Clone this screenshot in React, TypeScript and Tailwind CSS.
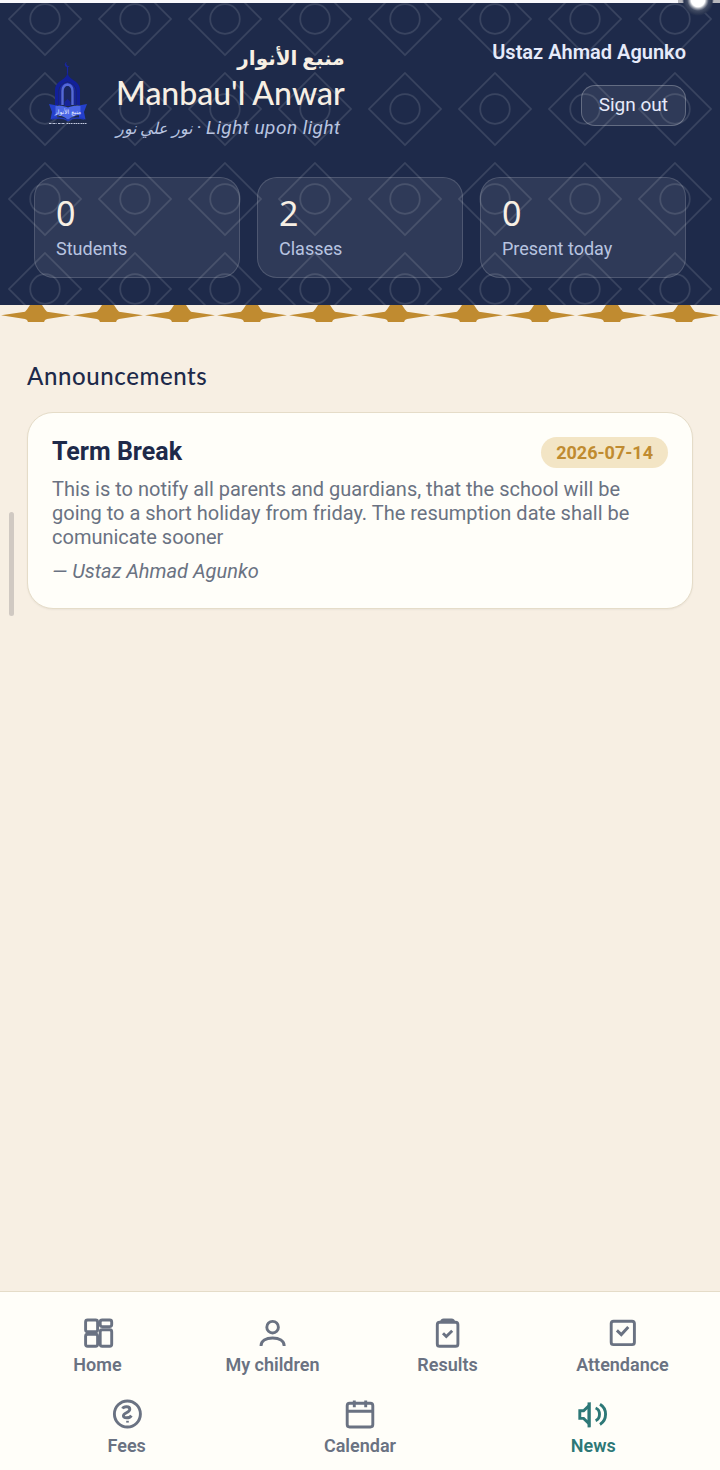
import type { ReactNode } from "react";

const stats = [
  { label: "Students", value: 0 },
  { label: "Classes", value: 2 },
  { label: "Present today", value: 0 },
];

const announcements = [
  {
    title: "Term Break",
    date: "2026-07-14",
    body: "This is to notify all parents and guardians, that the school will be going to a short holiday from friday. The resumption date shall be comunicate sooner",
    author: "Ustaz Ahmad Agunko",
  },
];

function NavIcon({ children }: { children: ReactNode }) {
  return (
    <svg
      viewBox="0 0 36 36"
      className="size-9"
      fill="none"
      stroke="currentColor"
      strokeWidth="2.9"
      aria-hidden="true"
    >
      {children}
    </svg>
  );
}

const navItems = [
  {
    label: "Home",
    icon: (
      <NavIcon>
        <rect x="5.6" y="5" width="12" height="11.8" rx="2" />
        <rect x="20.2" y="5" width="11.5" height="6.6" rx="2" />
        <rect x="5.6" y="19.2" width="12" height="12" rx="2" />
        <rect x="20.2" y="14.8" width="11.5" height="16.4" rx="2" />
      </NavIcon>
    ),
  },
  {
    label: "My children",
    icon: (
      <NavIcon>
        <circle cx="17.6" cy="12.2" r="5.8" />
        <path d="M6 31c0-5.2 5-8 11.6-8s11.6 2.8 11.6 8" />
      </NavIcon>
    ),
  },
  {
    label: "Results",
    icon: (
      <NavIcon>
        <rect x="7.3" y="7.3" width="20.6" height="24" rx="2.4" />
        <path d="M11.6 7.3c0-1.5.8-2.3 2.2-2.3h7.6c1.4 0 2.2.8 2.2 2.3" />
        <path d="m13 18.2 3.3 3.3 5.9-5.8" />
      </NavIcon>
    ),
  },
  {
    label: "Attendance",
    icon: (
      <NavIcon>
        <rect x="6.2" y="6.2" width="23.2" height="23.4" rx="2.4" />
        <path d="m11.9 15.4 4.4 4.2 7-7.6" />
      </NavIcon>
    ),
  },
  {
    label: "Fees",
    icon: (
      <NavIcon>
        <circle cx="18.4" cy="18" r="13" />
        <path d="M13.6 12.6c1.2-2.6 7.2-2.6 7.2.6 0 3.6-6.4 3.4-6.4 6.6 0 2.6 6 2.8 8-.2" />
        <path d="M17.2 25.7h2.6" strokeWidth="1.8" />
      </NavIcon>
    ),
  },
  {
    label: "Calendar",
    icon: (
      <NavIcon>
        <rect x="5.2" y="7.3" width="25.6" height="23.7" rx="2.4" />
        <path d="M5.2 15.2h25.6M12.3 4.6v6.6M23.7 4.6v6.6" />
      </NavIcon>
    ),
  },
  {
    label: "News",
    active: true,
    icon: (
      <NavIcon>
        <path d="M4.8 14.8v7.6h3.8l5.6 5.4V9.4l-5.6 5.4z" />
        <path d="M14 6.4v25" />
        <path d="M20.6 12c5.2 2 5.2 10.6 0 12.6" />
        <path d="M25 8.2c7.4 4.4 7.4 15.8 0 20.2" />
      </NavIcon>
    ),
  },
];

function Pattern() {
  return (
    <svg className="absolute inset-0 size-full" aria-hidden="true">
      <defs>
        <pattern id="tiles" y="-29" width="90" height="90" patternUnits="userSpaceOnUse">
          <g fill="none" stroke="#ffffff" strokeOpacity="0.12" strokeWidth="1.7">
            <path d="M45 9 81 45 45 81 9 45z" />
            <circle cx="45" cy="45" r="14.8" />
          </g>
        </pattern>
      </defs>
      <rect width="100%" height="100%" fill="url(#tiles)" />
    </svg>
  );
}

function StarBorder() {
  return (
    <svg className="block h-[17px] w-full" aria-hidden="true">
      <defs>
        <pattern id="stars" width="72" height="17" patternUnits="userSpaceOnUse">
          <path
            d="M1 10.200 25 6.800 27 4.500 30 0H42L45 4.500 47 6.800 71 10.200 47 14 45 15 44 17H28L27 15 25 14z"
            fill="#c08b30"
          />
        </pattern>
      </defs>
      <rect width="100%" height="17" fill="url(#stars)" />
    </svg>
  );
}

function Logo() {
  return (
    <svg viewBox="0 0 40 68" className="h-[68px] w-10 shrink-0" role="img" aria-label="Manbau'l Anwar">
      <path d="M19 4a2.6 2.6 0 1 0 2.8 3.4A2.2 2.2 0 1 1 19 4z" fill="#1826a0" />
      <path d="M19.5 8v8" stroke="#1826a0" strokeWidth="1.2" />
      <path
        d="M19.5 14.500c.6 3.500 2 5 5 7 5 3 7.500 6 7.500 10.500v15H7V32c0-4.500 2.500-7.500 7.500-10.500 3-2 4.400-3.500 5-7z"
        fill="#12209a"
      />
      <path d="M10.500 47V33c0-4.500 3.500-8 9-9.500 5.500 1.500 9 5 9 9.500v14z" fill="#1a2760" />
      <path d="M12 47V33.500c0-4.500 3-7.500 7.500-8.500 4.500 1 7.500 4 7.500 8.500V47" fill="none" stroke="#1726a8" strokeWidth="1.4" />
      <path d="M14.500 47V33c0-3.500 2-6 5-6.500 3 .5 5 3 5 6.500v14" fill="none" stroke="#5468d8" strokeWidth="2.4" />
      <path d="m19.500 41 3 3v4h-6v-4z" fill="#16249c" />
      <path d="m1 46 8 1.500v12.500L2.500 61.500 4 54zM39 46l-8 1.500v12.500l6.500 1.500L36 54z" fill="#2440cc" />
      <path
        d="M7.500 48c5-.5 9 0 12.500 1.500C23.500 48 27.500 47.500 32.500 48v9c-4.500 0-9 1.500-12.500 5C16.500 58.500 12 57 7.500 57z"
        fill="#4b67e6"
      />
      <path d="M4 61c6-1.500 12-1 16 1.500 4-2.500 10-3 16-1.500" fill="none" stroke="#2038b8" strokeWidth="1.5" />
      <text x="20" y="56" textAnchor="middle" fontSize="6" fill="#e8ecff" fontFamily="DejaVu Sans, sans-serif">
        منبع الأنوار
      </text>
      <path
        d="M1 65.500h8m1 0h7m1.500 0h6m1 0h6m1 0h6"
        stroke="#c4cae0"
        strokeWidth="1.2"
        strokeDasharray="2 .5 1 .6"
      />
    </svg>
  );
}

export default function App() {
  return (
    <div className="relative flex min-h-screen flex-col bg-[#f7efe3] font-['Roboto',sans-serif] text-gray-500">
      <div className="h-[3px] bg-[#f8f8fc]" />
      <div className="absolute top-0 right-0 z-10 h-5 w-[42px] overflow-hidden" aria-hidden="true">
        <div className="h-[3px] bg-[#b8b8be]" />
        <div className="absolute -top-4 left-1 size-8 rounded-full bg-[radial-gradient(circle,#ffffff_30%,#8b919f_40%,#414b63_48%,#2b3651_62%,transparent_70%)]" />
      </div>

      <header className="relative bg-[#1e2a4a] px-[34px] pt-[38px] pb-[27px]">
        <Pattern />
        <div className="relative flex items-start justify-between">
          <div className="flex items-center gap-7 pl-[14px]">
            <Logo />
            <div className="font-['Lato','DejaVu_Sans',sans-serif]">
              <p dir="rtl" lang="ar" className="text-xl leading-8 font-bold text-[#f7efe4]">
                منبع الأنوار
              </p>
              <h1 className="text-[32px] leading-10 font-medium text-[#f7efe4]">Manbau'l Anwar</h1>
              <p className="font-['Roboto','DejaVu_Sans',sans-serif] text-[19px] leading-[30px] tracking-wide text-[#b8c4e0] italic">
                <span className="text-base">نور علي نور</span> · Light upon light
              </p>
            </div>
          </div>
          <div className="flex flex-col items-end gap-[22px]">
            <span className="text-xl leading-[22px] font-semibold text-[#e6eafa]">Ustaz Ahmad Agunko</span>
            <button
              type="button"
              className="h-[41px] rounded-[14px] border border-white/25 bg-white/8 px-[17px] text-[19px] text-[#e6eafa]"
            >
              Sign out
            </button>
          </div>
        </div>

        <div className="relative mt-[34px] grid grid-cols-3 gap-[17px]">
          {stats.map((stat) => (
            <div
              key={stat.label}
              className="flex flex-col rounded-[20px] border border-white/15 bg-white/8 px-[21px] pt-[15px] pb-[17px]"
            >
              <span className="font-['Noto_Sans',sans-serif] text-[34px] leading-10 text-[#f7efe4]">{stat.value}</span>
              <span className="pt-[5px] text-lg leading-[22px] text-[#b8c4e0]">{stat.label}</span>
            </div>
          ))}
        </div>
      </header>
      <StarBorder />

      <main className="flex-1 px-[27px] pt-[38px]">
        <h2 className="font-['Lato',sans-serif] text-2xl leading-8 font-medium tracking-wide text-[#1e2a4a]">
          Announcements
        </h2>
        {announcements.map((item) => (
          <article
            key={item.title}
            className="mt-5 rounded-[26px] border border-[#e5dcc8] bg-[#fffef9] px-6 pt-6 pb-[25px] shadow-xs"
          >
            <div className="flex items-start justify-between">
              <h3 className="text-[25px] leading-[30px] font-bold text-[#1e2a4a]">{item.title}</h3>
              <time className="rounded-full bg-[#f3e5c5] px-[15px] py-1 text-lg leading-[23px] font-bold text-[#c08b30]">
                {item.date}
              </time>
            </div>
            <p className="mt-[9px] text-xl leading-6">{item.body}</p>
            <p className="mt-2.5 text-xl leading-6 italic">— {item.author}</p>
          </article>
        ))}
      </main>

      <div className="absolute top-[512px] left-[9px] h-[104px] w-[5px] rounded-full bg-[#d0c9c2]" />

      <nav className="flex flex-wrap gap-y-[17px] border-t border-[#e5dcc8] bg-[#fffef9] px-2.5 pt-[23px] pb-2.5">
        {navItems.map((item) => (
          <a
            key={item.label}
            href="#"
            className={`flex flex-1 basis-[23%] flex-col items-center text-lg font-semibold ${
              item.active ? "text-[#2d7877]" : "text-gray-500"
            }`}
          >
            {item.icon}
            <span className="leading-7">{item.label}</span>
          </a>
        ))}
      </nav>
    </div>
  );
}
